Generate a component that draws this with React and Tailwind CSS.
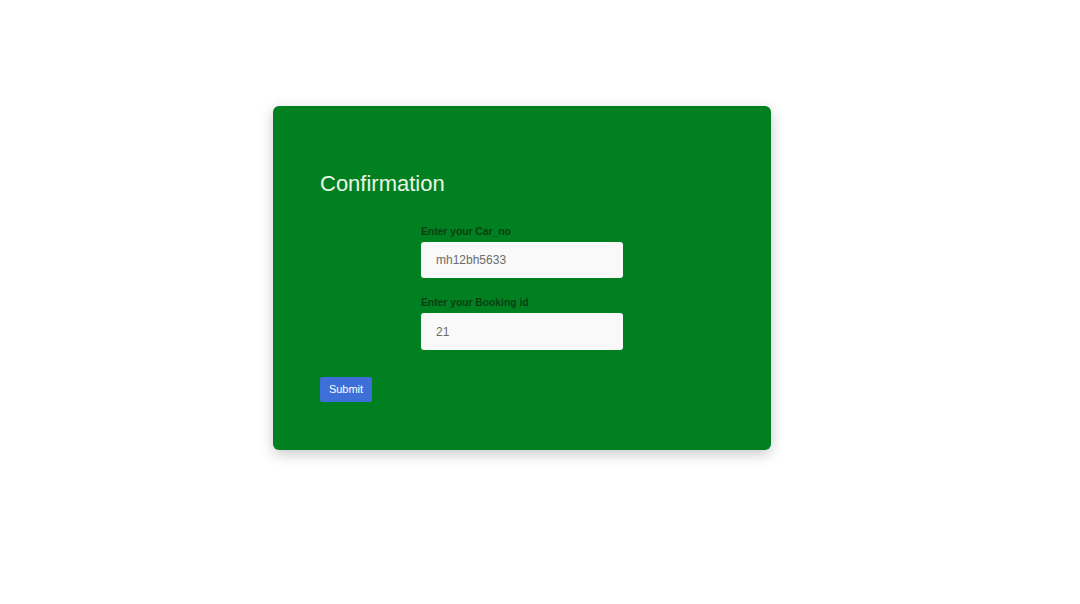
export default function App() {
  return (
    <div className="min-h-[604px] w-full bg-white pt-[106px] pl-[273px]" style={{ fontFamily: '"Liberation Sans", Arial, sans-serif' }}>
      <div className="w-[498px] h-[344px] rounded-[6px] bg-[#018021] shadow-[0_4px_14px_rgba(0,0,0,0.22)] pt-[65px] pl-[47px] box-border">
        <h2 className="text-[22px] leading-[25px] text-[#eaf6e6] font-normal m-0">Confirmation</h2>
        <div className="ml-[101px] w-[202px] mt-[29px] flex flex-col">
          <label className="text-[10.3px] leading-[13px] font-bold text-[#0b3f12]">Enter your Car_no</label>
          <div className="mt-[4px] h-[36px] rounded-[3px] bg-[#f9f9f9] flex items-center pl-[15px] text-[12px] text-[#6b6b6b]">mh12bh5633</div>
          <label className="mt-[18px] text-[10.3px] leading-[13px] font-bold text-[#0b3f12]">Enter your Booking id</label>
          <div className="mt-[4px] h-[37px] rounded-[3px] bg-[#f9f9f9] flex items-center pl-[15px] text-[12px] text-[#6b6b6b]">21</div>
        </div>
        <button className="mt-[27px] w-[52px] h-[25px] rounded-[2px] bg-[#3e6fd8] text-white text-[11px] flex items-center justify-center">Submit</button>
      </div>
    </div>
  );
}
